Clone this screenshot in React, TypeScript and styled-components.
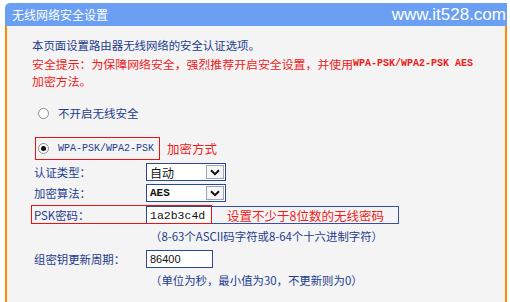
import styled, { createGlobalStyle } from 'styled-components';

const GlobalStyle = createGlobalStyle`
  html, body {
    margin: 0;
    padding: 0;
    background: #fff;
  }
  body {
    font-family: "Noto Sans CJK SC", "Liberation Sans", sans-serif;
  }
`;

const NAVY = '#1c3c8e';
const RED = '#f01c1c';

const App = () => {
  return (
    <>
      <GlobalStyle />
      <Frame>
        <Header>
          <HeaderTitle>无线网络安全设置</HeaderTitle>
          <Site>www.it528.com</Site>
        </Header>
        <Body>
          <Intro>本页面设置路由器无线网络的安全认证选项。</Intro>
          <Warning>
            <WarnLine>
              安全提示：为保障网络安全，强烈推荐开启安全设置，并使用<Mono>WPA-PSK/WPA2-PSK AES</Mono>
            </WarnLine>
            <WarnLine>加密方法。</WarnLine>
          </Warning>

          <RadioRow>
            <Radio />
            <RadioLabel>不开启无线安全</RadioLabel>
          </RadioRow>

          <ModeRow>
            <ModeBox>
              <Radio checked />
              <ModeLabel>WPA-PSK/WPA2-PSK</ModeLabel>
            </ModeBox>
            <Note>加密方式</Note>
          </ModeRow>

          <FieldRow $top={2}>
            <Label>认证类型：</Label>
            <Select>
              <SelectValue>自动</SelectValue>
              <SelectButton>
                <Chevron />
              </SelectButton>
            </Select>
          </FieldRow>

          <FieldRow $top={1}>
            <Label>加密算法：</Label>
            <Select>
              <SelectValue $mono>AES</SelectValue>
              <SelectButton>
                <Chevron />
              </SelectButton>
            </Select>
          </FieldRow>

          <FieldRow $top={2}>
            <Highlight />
            <Label>PSK密码：</Label>
            <Input $width={66} $mono>1a2b3c4d</Input>
            <Callout>设置不少于8位数的无线密码</Callout>
          </FieldRow>

          <Hint>（8-63个ASCII码字符或8-64个十六进制字符）</Hint>

          <FieldRow $top={3}>
            <Label>组密钥更新周期：</Label>
            <Input $width={67}>86400</Input>
          </FieldRow>

          <Hint>（单位为秒，最小值为30，不更新则为0）</Hint>
        </Body>
      </Frame>
    </>
  );
};

const Chevron = () => (
  <svg width="10" height="7" viewBox="0 0 10 7">
    <path d="M1 1.2 L5 5.2 L9 1.2" fill="none" stroke="#111" strokeWidth="2" />
  </svg>
);

const Frame = styled.div`
  width: 502px;
  margin: 3px 0 0 5px;
`;
const Header = styled.div`
  height: 23px;
  display: flex;
  justify-content: space-between;
  align-items: center;
  padding: 0 1px 0 7px;
  background: #6a9ff3;
  border-top-left-radius: 5px;
  color: #fff;
`;
const HeaderTitle = styled.span`
  font-size: 12px;
  line-height: 23px;
`;
const Site = styled.span`
  font-family: "Liberation Sans", Arial, sans-serif;
  font-size: 17px;
  line-height: 23px;
`;
const Body = styled.div`
  height: 276px;
  box-sizing: border-box;
  padding: 10px 0 0 25px;
  background: #f4f4f4;
  border-left: 2px solid #ff8a00;
  border-right: 2px solid #ff8a00;
`;
const Intro = styled.div`
  height: 18px;
  font-size: 11.4px;
  line-height: 18px;
  color: ${NAVY};
`;
const Warning = styled.div`
  margin-top: 1px;
  display: flex;
  flex-direction: column;
  color: ${RED};
`;
const WarnLine = styled.div`
  height: 17px;
  display: flex;
  align-items: center;
  font-size: 11.9px;
  white-space: nowrap;
`;
const Mono = styled.span`
  font-family: "Liberation Mono", monospace;
  font-size: 10px;
  font-weight: 700;
`;
const RadioRow = styled.div`
  height: 20px;
  margin-top: 14px;
  display: flex;
  align-items: center;
  padding-left: 6px;
`;
const Radio = styled.span<{ checked?: boolean }>`
  width: 11px;
  height: 11px;
  box-sizing: border-box;
  border-radius: 50%;
  border: 1px solid #8a8a8a;
  background: #fff;
  display: flex;
  align-items: center;
  justify-content: center;
  &::after {
    content: '';
    width: 5px;
    height: 5px;
    border-radius: 50%;
    background: ${(p) => (p.checked ? '#111' : 'transparent')};
  }
`;
const RadioLabel = styled.span`
  margin-left: 9px;
  font-size: 11.5px;
  color: ${NAVY};
`;
const ModeRow = styled.div`
  margin-top: 14px;
  display: flex;
  align-items: center;
`;
const ModeBox = styled.div`
  width: 125px;
  height: 23px;
  box-sizing: border-box;
  margin-left: 3px;
  padding-left: 2px;
  display: flex;
  align-items: center;
  border: 1px solid #ee1111;
`;
const ModeLabel = styled.span`
  margin-left: 9px;
  font-family: "Liberation Mono", monospace;
  font-size: 10px;
  color: ${NAVY};
`;
const Note = styled.span`
  margin-left: 7px;
  font-size: 12.5px;
  color: ${RED};
`;
const FieldRow = styled.div<{ $top: number }>`
  position: relative;
  height: 20px;
  margin-top: ${(p) => p.$top}px;
  display: flex;
  align-items: center;
`;
const Label = styled.span`
  width: 112px;
  padding-left: 2px;
  font-size: 11.4px;
  color: ${NAVY};
`;
const Select = styled.div`
  width: 80px;
  height: 18px;
  box-sizing: border-box;
  display: flex;
  align-items: center;
  justify-content: space-between;
  border: 1px solid #2c4893;
  background: #fff;
`;
const SelectValue = styled.span<{ $mono?: boolean }>`
  padding-left: 3px;
  font-family: ${(p) => (p.$mono ? '"Liberation Mono", monospace' : '"Noto Sans CJK SC", sans-serif')};
  font-size: ${(p) => (p.$mono ? '11px' : '12px')};
  font-weight: ${(p) => (p.$mono ? 700 : 400)};
  color: #111;
`;
const SelectButton = styled.span`
  width: 18px;
  height: 14px;
  margin-right: 1px;
  box-sizing: border-box;
  display: flex;
  align-items: center;
  justify-content: center;
  border: 1px solid #9aa6b8;
  background: #f6f6f6;
`;
const Input = styled.div<{ $width: number; $mono?: boolean }>`
  width: ${(p) => p.$width}px;
  height: 18px;
  box-sizing: border-box;
  padding-left: 3px;
  display: flex;
  align-items: center;
  border: 1px solid #2c4893;
  background: #fff;
  font-family: ${(p) => (p.$mono ? '"Liberation Mono", monospace' : '"Liberation Sans", sans-serif')};
  font-size: ${(p) => (p.$mono ? '11.5px' : '11px')};
  color: #111;
`;
const Highlight = styled.div`
  position: absolute;
  left: -1px;
  top: 0;
  width: 181px;
  height: 19px;
  box-sizing: border-box;
  border: 1px solid #ee1111;
  pointer-events: none;
`;
const Callout = styled.div`
  width: 187px;
  height: 18px;
  box-sizing: border-box;
  padding-left: 15px;
  display: flex;
  align-items: center;
  border: 1.5px solid #3650a8;
  border-left: none;
  font-size: 12.5px;
  color: ${RED};
`;
const Hint = styled.div`
  height: 20px;
  margin-top: 1px;
  padding-left: 118px;
  display: flex;
  align-items: center;
  font-size: 11.4px;
  color: ${NAVY};
`;

export default App;
